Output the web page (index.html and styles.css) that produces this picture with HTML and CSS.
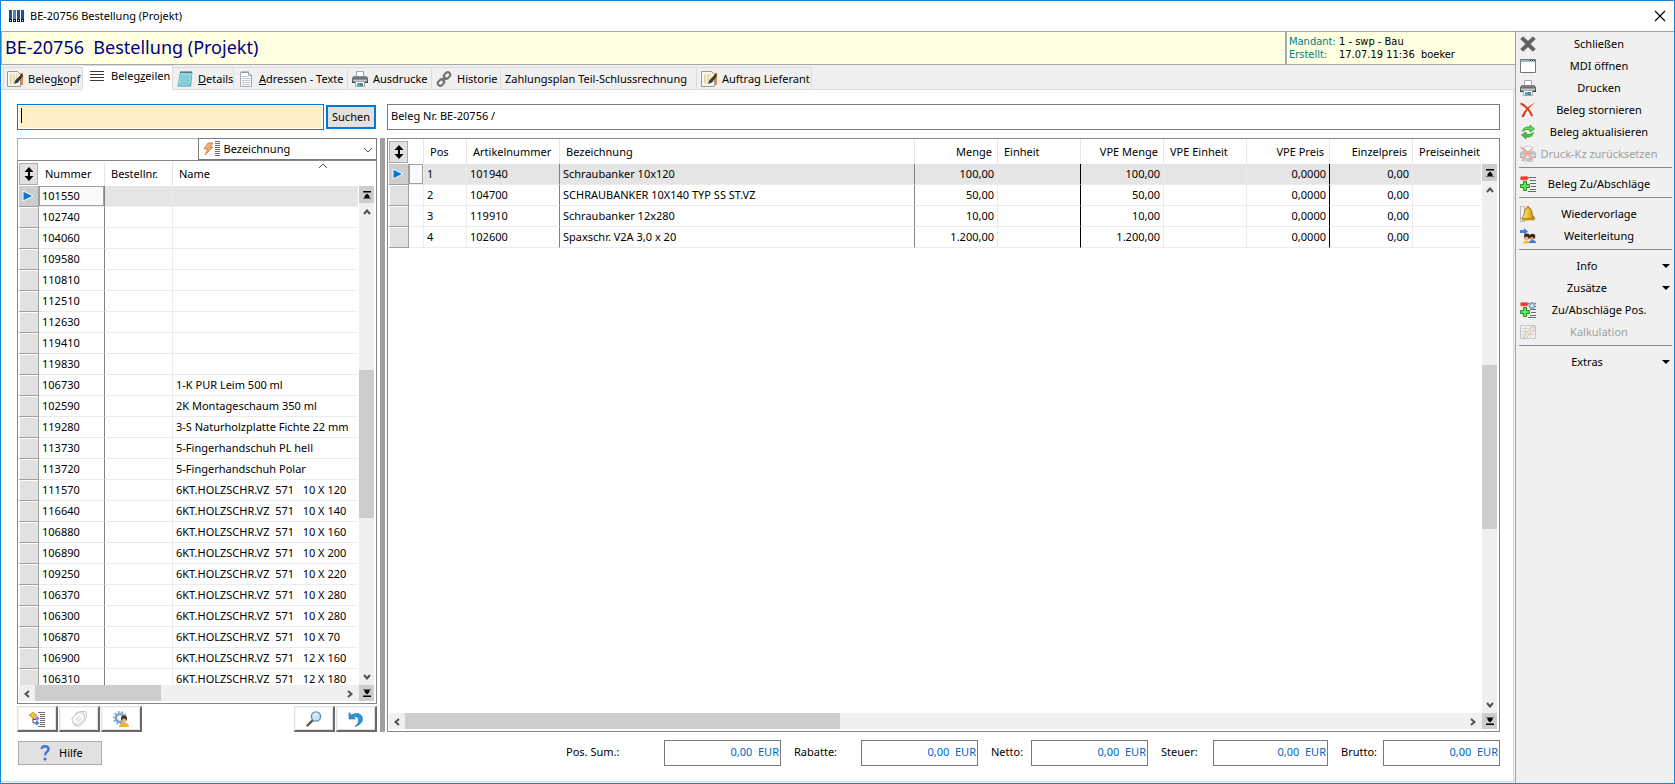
FILE: index.html
```html
<!DOCTYPE html>
<html lang="de">
<head>
    <meta charset="UTF-8">
    <meta name="viewport" content="width=device-width, initial-scale=1.0">
    <title>BE-20756 Bestellung (Projekt)</title>
    <link rel="stylesheet" href="styles.css">
</head>
<body>
    <svg class="defs" aria-hidden="true">
        <defs>
            <linearGradient id="gold" x1="0" x2="1"><stop offset="0" stop-color="#fff0a0"/><stop offset=".5" stop-color="#f2c230"/><stop offset="1" stop-color="#a8780c"/></linearGradient>
            <linearGradient id="steel" x1="0" x2="0" y1="0" y2="1"><stop offset="0" stop-color="#8a8d90"/><stop offset="1" stop-color="#3c3f42"/></linearGradient>
        </defs>
        <symbol id="i-note" viewBox="0 0 16 16">
            <path d="M10 2h6v12h-6z" fill="#e08a3a"/>
            <path d="M.5.500h10l3 3v12H.5z" fill="#faf8ec" stroke="#9a9a92"/>
            <path d="M3 4h7M3 6h7M3 8h6M3 10h5M3 12h4" stroke="#d8b95a" stroke-dasharray="2 1"/>
            <path d="M15 2.500L8.500 9l-1.500 4 4-1.500L16 5z" fill="#3a3a3a"/>
        </symbol>
        <symbol id="i-lines" viewBox="0 0 16 16"><path d="M1 3.500h14M1 6.500h14M1 9.500h14M1 12.500h14" stroke="#3c3c3c"/></symbol>
        <symbol id="i-pad" viewBox="0 0 16 16">
            <path d="M3 1h12.500l-1.500 14.500H.5z" fill="#4aa5b5"/>
            <path d="M3.500 2h11.500l-2 12.500H1z" fill="#95d3de"/>
            <path d="M4.500 6h8M4 9h8M3.500 12h8" stroke="#73c0cc"/>
            <path d="M4 0v2M6 0v2M8 0v2M10 0v2M12 0v2M14 0v2" stroke="#4c5a60"/>
        </symbol>
        <symbol id="i-page" viewBox="0 0 16 16">
            <path d="M2.500 1.500h8l3 3v11h-11z" fill="#fcfcfc" stroke="#a4a8ac"/>
            <path d="M10.500 1.500v3h3" fill="none" stroke="#a4a8ac"/>
            <path d="M4 0v2M6 0v2M8 0v2M10 0v2" stroke="#8a8c90"/>
            <path d="M4 5.500h6M4 7.500h8M4 9.500h8M4 11.500h8M4 13.500h8" stroke="#c0c8d0"/>
        </symbol>
        <symbol id="i-print" viewBox="0 0 16 16">
            <path d="M4.500.5h7v5h-7z" fill="#fff" stroke="#a0a4a8"/>
            <path d="M1.500 5h13l1.500 2v5H0V7z" fill="url(#steel)"/>
            <path d="M1 9.500h14" stroke="#c8cacc" stroke-width="2"/>
            <path d="M3.500 10.500h9v5h-9z" fill="#fff" stroke="#a0a4a8"/>
            <path d="M5 12h3v3H5z" fill="#3fa9dc"/><path d="M8 12h3v3H8z" fill="#4a8a8c"/>
        </symbol>
        <symbol id="i-link" viewBox="0 0 16 16">
            <g fill="none" stroke="#707274" stroke-width="2">
                <rect x="8.500" y="1" width="5" height="7" rx="2.500" transform="rotate(45 11 4.500)"/>
                <rect x="2.500" y="8" width="5" height="7" rx="2.500" transform="rotate(45 5 11.500)"/>
                <path d="M6 10l4-4"/>
            </g>
        </symbol>
        <symbol id="i-close" viewBox="0 0 16 16">
            <path d="M3 .5l5 4.500 5-4.500L15.500 3l-5 5 5 5-2.500 2.500-5-4.500-5 4.500L.5 13l5-5-5-5z" fill="#5d6062" stroke="#898c8e" stroke-width=".6"/>
        </symbol>
        <symbol id="i-window" viewBox="0 0 16 16">
            <path d="M.5 1.500h15v13H.5z" fill="#fff" stroke="#6e7680"/>
            <path d="M1 3h14" stroke="#9db4d0" stroke-width="2"/>
            <path d="M10 2.500h1M12 2.500h1M14 2.500h1" stroke="#44546c"/>
        </symbol>
        <symbol id="i-cancel" viewBox="0 0 16 16">
            <path d="M.5.500c5 1.500 9.500 6.500 12.500 12.500l-1.500 2C9 9 5 5 .5 2.500z" fill="#e03a20"/>
            <path d="M15.500.500C10 4 6 9 4 15H1.500C4 8.500 8.500 3.500 15.500.500z" fill="#e03a20"/>
        </symbol>
        <symbol id="i-refresh" viewBox="0 0 16 16">
            <path d="M2.500 7.500C3 4 6.500 2 10 3.500V1l4.500 4-4.500 3V6C7.500 5 5 5.500 2.500 7.500z" fill="#6bd45a" stroke="#2c9a28" stroke-width=".8"/>
            <path d="M13.500 8.500C13 12 9.500 14 6 12.500V15l-4.500-4L6 8v2c2.500 1 5 .5 7.500-1.500z" fill="#4cc43e" stroke="#2c9a28" stroke-width=".8"/>
        </symbol>
        <symbol id="i-plusminus" viewBox="0 0 16 16">
            <path d="M8 1.500h8M10 4.500h6M10 7.500h6M11 10.500h5M10 13.500h6M8 15.500h8" stroke="#6a6a6a"/>
            <rect x=".5" y=".5" width="7.500" height="3.500" rx="1" fill="#f03828" stroke="#ff7a70" stroke-width=".8"/>
            <path d="M3.500 5.500h3v3h3v3h-3v3h-3v-3h-3v-3h3z" fill="#6cdc5c" stroke="#1c9420"/>
        </symbol>
        <symbol id="i-bell" viewBox="0 0 16 16">
            <path d="M.5.5h4v15h-4z" fill="#f4f4f4" stroke="#b8b8b8"/>
            <path d="M8 1.500c3 0 3.500 3 4 5.500.4 2.500 1.500 3.500 3 5.500H1.500C3.500 10.500 3.800 9 4.200 7 4.800 4 5.500 1.500 8 1.500z" fill="url(#gold)" stroke="#8a660c" stroke-width=".8"/>
            <path d="M2 13.500h12.500" stroke="#c89a1c" stroke-width="2"/><circle cx="8" cy="1.300" r="1.200" fill="#b88a14"/>
        </symbol>
        <symbol id="i-people" viewBox="0 0 16 16">
            <path d="M0 2h4V0l4 3.500L4 7V5H0z" fill="#4a7fd0"/>
            <path d="M3 15.500c0-4 7-4 7 0z" fill="#f0c040"/><path d="M9 15c0-4 7-4 7 0z" fill="#3c78d8"/>
            <circle cx="7" cy="8.500" r="3" fill="#3a2418"/><circle cx="6.500" cy="10.500" r="2" fill="#e8b080"/>
            <circle cx="12.500" cy="8.500" r="2.800" fill="#3a2418"/><circle cx="12" cy="10.500" r="1.800" fill="#d89468"/>
        </symbol>
        <symbol id="i-calc" viewBox="0 0 16 16">
            <path d="M.5 1.500h15v13H.5z" fill="#f6f6f6" stroke="#8c8c8c"/>
            <path d="M1 4.500h14M1 7.500h14M1 10.500h14M5.500 2v12M10.500 2v12" stroke="#b0b0b0"/>
            <path d="M13 2l2.500 2.500-9 9L3 15l1-3.500z" fill="#f0d8a0" stroke="#a08050"/>
        </symbol>
        <symbol id="i-flash" viewBox="0 0 18 16">
            <path d="M5 2h5L7 6h3l-8 8 3-6H1z" fill="#f5b070" stroke="#b86a3c" stroke-width=".7"/>
            <path d="M12 .5h5M12 2.500h5M12 4.500h5M12 6.500h5M12 8.500h5M12 10.500h5M12 12.500h5M12 14.500h5" stroke="#707070"/>
        </symbol>
        <symbol id="i-updown" viewBox="0 0 10 14"><path d="M5 0l4.500 5H6v4h3.500L5 14 .5 9H4V5H.5z"/></symbol>
        <symbol id="i-current" viewBox="0 0 12 12"><path d="M1 1l10 5-10 5z" fill="#0078d7" stroke="#fff"/></symbol>
        <symbol id="i-chev" viewBox="0 0 8 6"><path d="M1 5l3-3.500L7 5" fill="none" stroke="currentColor" stroke-width="2"/></symbol>
        <symbol id="i-chevthin" viewBox="0 0 10 6"><path d="M1 5l4-4 4 4" fill="none" stroke="#505050"/></symbol>
        <symbol id="i-end" viewBox="0 0 8 8"><path d="M0 0h8v1.500H0zM4 2.500L6.500 5H8v2.500H0V5h1.500z"/><path d="M0 7h1.500V4H0zM8 7H6.500V4H8z" fill="#cdcdcd"/></symbol>
        <symbol id="i-tree" viewBox="0 0 16 16">
            <path d="M9 1.500h7M11 3.500h5M11 5.500h5M11 7.500h5M11 9.500h5M11 11.500h5M11 13.500h5M9 15.500h7" stroke="#707070"/>
            <path d="M4 6v6h3M4 8.500h3" fill="none" stroke="#505050"/>
            <path d="M4 1l4 3-4 3.500L0 4z" fill="#f0c430" stroke="#a88418" stroke-width=".6"/>
            <path d="M8 5l2.500 2.500L8 10 5.500 7.500z" fill="#b86ad8"/><path d="M8 9.500l2.500 2.500L8 14.500 5.500 12z" fill="#4a80d8"/>
        </symbol>
        <symbol id="i-tag" viewBox="0 0 16 16">
            <g fill="#fafafa" stroke="#c8c8c8">
                <path d="M5 2l4-1.500h6l.5 5-2 5-5.500 5-5-1z"/><path d="M1 7l6-5.500 5.500.5 1.500 5.500L7.500 14 1.500 12z"/>
                <path d="M4.500 9l4-3.500M6 11l4-3.500"/>
            </g>
        </symbol>
        <symbol id="i-gear" viewBox="0 0 16 16">
            <circle cx="7" cy="7" r="6" fill="none" stroke="#8aaccc" stroke-width="2" stroke-dasharray="2 1.600"/>
            <circle cx="7" cy="7" r="4" fill="#f2f7fb" stroke="#7aa6ca" stroke-width="2.500"/>
            <path d="M6 16c0-6 10-6 10 0z" fill="#f0b428"/>
            <circle cx="11" cy="7.500" r="3" fill="#4a2a18"/><circle cx="11" cy="9.500" r="2" fill="#eebc90"/>
        </symbol>
        <symbol id="i-gearsmall" viewBox="0 0 16 16">
            <use href="#i-plusminus"/>
            <circle cx="12" cy="3.500" r="2.500" fill="#dce8f4" stroke="#8aa8c8" stroke-width="2"/>
        </symbol>
        <symbol id="i-magnify" viewBox="0 0 16 16">
            <path d="M6.500 9.500l-5 5" stroke="#5c5248" stroke-width="2.400" stroke-linecap="round"/>
            <circle cx="10" cy="5.500" r="4.600" fill="#c4e4fa" stroke="#6c8ca8" stroke-width="1.400"/>
            <path d="M7.500 5c.5-1.500 2-2.300 3.500-2" stroke="#fff" fill="none"/>
        </symbol>
        <symbol id="i-undo" viewBox="0 0 16 16">
            <path d="M1 1.500V8h6.500L5.500 6c3.500-1 5.500 1 5 4-.2 1.800-1.500 3.500-3.500 5.500 5-1.500 7.500-4.500 7.500-7.800C14.500 3 9 .8 3.500 4z" fill="#2c94dc" stroke="#1a6cb0" stroke-width=".6"/>
        </symbol>
        <symbol id="i-help" viewBox="0 0 10 16">
            <path d="M1.500 4C2 1.800 3.500 1.300 5 1.300c2 0 3.500 1 3.500 3C8.500 7 5 7 5 10.500" fill="none" stroke="#3f74d8" stroke-width="2.400"/>
            <circle cx="5" cy="14" r="1.600" fill="#3f74d8"/>
        </symbol>
        <symbol id="i-app" viewBox="0 0 16 12">
            <path d="M0 0h3v12H0zM8 0h3v12H8z" fill="#24508c"/><path d="M4 0h3v12H4z" fill="#5c80b4"/><path d="M12 0h3v12h-3z" fill="#1c4c9c"/>
            <path d="M0 9h3v3H0zM4 9h3v3H4zM8 9h3v3H8zM12 9h3v3h-3z" fill="#101820"/>
            <path d="M1 10.500h1M5 10.500h1M9 10.500h1M13 10.500h1" stroke="#fff"/>
        </symbol>
        <symbol id="i-x" viewBox="0 0 12 12"><path d="M1 1l10 10M11 1L1 11" stroke="#000" stroke-width="1.200"/></symbol>
    </svg>

    <div class="window">
        <header class="titlebar">
            <svg class="app-icon"><use href="#i-app"/></svg>
            <span>BE-20756 Bestellung (Projekt)</span>
            <button class="close" aria-label="Fenster schließen"><svg><use href="#i-x"/></svg></button>
        </header>

        <div class="body">
            <main class="main">
                <div class="banner">
                    <h1>BE-20756&nbsp; Bestellung (Projekt)</h1>
                    <dl class="meta">
                        <dt>Mandant:</dt><dd>1 - swp - Bau</dd>
                        <dt>Erstellt:</dt><dd>17.07.19 11:36&nbsp; boeker</dd>
                    </dl>
                </div>

                <nav class="tabs" role="tablist">
                    <button class="tab" role="tab"><svg class="icon"><use href="#i-note"/></svg><span>Beleg<u>k</u>opf</span></button>
                    <button class="tab active" role="tab" aria-selected="true"><svg class="icon"><use href="#i-lines"/></svg><span>Beleg<u>z</u>eilen</span></button>
                    <button class="tab" role="tab"><svg class="icon"><use href="#i-pad"/></svg><span><u>D</u>etails</span></button>
                    <button class="tab" role="tab"><svg class="icon"><use href="#i-page"/></svg><span><u>A</u>dressen - Texte</span></button>
                    <button class="tab" role="tab"><svg class="icon"><use href="#i-print"/></svg><span>Ausdrucke</span></button>
                    <button class="tab" role="tab"><svg class="icon"><use href="#i-link"/></svg><span>Historie</span></button>
                    <button class="tab" role="tab"><span>Zahlungsplan Teil-Schlussrechnung</span></button>
                    <button class="tab" role="tab"><svg class="icon"><use href="#i-note"/></svg><span>Auftrag Lieferant</span></button>
                </nav>

                <section class="page">
                    <div class="search-row">
                        <form class="search">
                            <input type="text" class="search-input" aria-label="Suche">
                            <span class="caret"></span>
                            <button type="button" class="search-button">Suchen</button>
                        </form>
                        <input type="text" class="beleg" aria-label="Beleg" value="Beleg Nr. BE-20756 /" readonly>
                    </div>

                    <div class="split">
                        <div class="left">
                            <div class="filter">
                                <input type="text" class="filter-input" aria-label="Filter">
                                <div class="combo">
                                    <svg class="combo-icon"><use href="#i-flash"/></svg>
                                    <select aria-label="Sortierung"><option>Bezeichnung</option></select>
                                    <svg class="combo-arrow"><use href="#i-chevthin"/></svg>
                                </div>
                            </div>

                            <div class="grid">
                                <div class="grid-view">
                                    <div class="grid-rows">
                                        <svg class="sort-mark"><use href="#i-chevthin"/></svg>
                                        <table class="articles">
                                            <colgroup><col class="c-head"><col class="c-num"><col class="c-order"><col></colgroup>
                                            <thead><tr><th class="handle"><span><svg><use href="#i-updown"/></svg></span></th><th>Nummer</th><th>Bestellnr.</th><th>Name</th></tr></thead>
                                            <tbody>
                                                <tr class="current"><td><svg><use href="#i-current"/></svg></td><td>101550</td><td></td><td></td></tr>
                                                <tr><td></td><td>102740</td><td></td><td></td></tr>
                                                <tr><td></td><td>104060</td><td></td><td></td></tr>
                                                <tr><td></td><td>109580</td><td></td><td></td></tr>
                                                <tr><td></td><td>110810</td><td></td><td></td></tr>
                                                <tr><td></td><td>112510</td><td></td><td></td></tr>
                                                <tr><td></td><td>112630</td><td></td><td></td></tr>
                                                <tr><td></td><td>119410</td><td></td><td></td></tr>
                                                <tr><td></td><td>119830</td><td></td><td></td></tr>
                                                <tr><td></td><td>106730</td><td></td><td>1-K PUR Leim 500 ml</td></tr>
                                                <tr><td></td><td>102590</td><td></td><td>2K Montageschaum 350 ml</td></tr>
                                                <tr><td></td><td>119280</td><td></td><td>3-S Naturholzplatte Fichte 22 mm</td></tr>
                                                <tr><td></td><td>113730</td><td></td><td>5-Fingerhandschuh PL hell</td></tr>
                                                <tr><td></td><td>113720</td><td></td><td>5-Fingerhandschuh Polar</td></tr>
                                                <tr><td></td><td>111570</td><td></td><td>6KT.HOLZSCHR.VZ  571   10 X 120</td></tr>
                                                <tr><td></td><td>116640</td><td></td><td>6KT.HOLZSCHR.VZ  571   10 X 140</td></tr>
                                                <tr><td></td><td>106880</td><td></td><td>6KT.HOLZSCHR.VZ  571   10 X 160</td></tr>
                                                <tr><td></td><td>106890</td><td></td><td>6KT.HOLZSCHR.VZ  571   10 X 200</td></tr>
                                                <tr><td></td><td>109250</td><td></td><td>6KT.HOLZSCHR.VZ  571   10 X 220</td></tr>
                                                <tr><td></td><td>106370</td><td></td><td>6KT.HOLZSCHR.VZ  571   10 X 280</td></tr>
                                                <tr><td></td><td>106300</td><td></td><td>6KT.HOLZSCHR.VZ  571   10 X 280</td></tr>
                                                <tr><td></td><td>106870</td><td></td><td>6KT.HOLZSCHR.VZ  571   10 X 70</td></tr>
                                                <tr><td></td><td>106900</td><td></td><td>6KT.HOLZSCHR.VZ  571   12 X 160</td></tr>
                                                <tr><td></td><td>106310</td><td></td><td>6KT.HOLZSCHR.VZ  571   12 X 180</td></tr>
                                            </tbody>
                                        </table>
                                    </div>
                                    <div class="vscroll">
                                        <span class="jump up"><svg><use href="#i-end"/></svg></span>
                                        <span class="step up"><svg><use href="#i-chev"/></svg></span>
                                        <div class="vtrack"><div class="vthumb"></div></div>
                                        <span class="step down"><svg><use href="#i-chev"/></svg></span>
                                    </div>
                                </div>
                                <div class="hscroll">
                                    <span class="step left-arrow"><svg><use href="#i-chev"/></svg></span>
                                    <div class="htrack"><div class="hthumb"></div></div>
                                    <span class="step right-arrow"><svg><use href="#i-chev"/></svg></span>
                                    <span class="jump down"><svg><use href="#i-end"/></svg></span>
                                </div>
                            </div>

                            <div class="tools">
                                <button class="tool" aria-label="Struktur"><svg class="icon"><use href="#i-tree"/></svg></button>
                                <button class="tool" aria-label="Etikett" disabled><svg class="icon"><use href="#i-tag"/></svg></button>
                                <button class="tool" aria-label="Einstellungen"><svg class="icon"><use href="#i-gear"/></svg></button>
                                <button class="tool find" aria-label="Suchen"><svg class="icon"><use href="#i-magnify"/></svg></button>
                                <button class="tool" aria-label="Zurück"><svg class="icon"><use href="#i-undo"/></svg></button>
                            </div>
                        </div>

                        <div class="splitter"></div>

                        <div class="grid">
                            <div class="grid-view">
                                <div class="grid-rows">
                                    <table class="positions">
                                        <colgroup><col class="c-head"><col class="c-flag"><col class="c-pos"><col class="c-art"><col><col class="c-val"><col class="c-val"><col class="c-val"><col class="c-val"><col class="c-val"><col class="c-val"><col class="c-unit"></colgroup>
                                        <thead>
                                            <tr><th class="handle"><span><svg><use href="#i-updown"/></svg></span></th><th></th><th>Pos</th><th>Artikelnummer</th><th>Bezeichnung</th><th class="num">Menge</th><th>Einheit</th><th class="num">VPE Menge</th><th>VPE Einheit</th><th class="num">VPE Preis</th><th class="num">Einzelpreis</th><th>Preiseinheit</th></tr>
                                        </thead>
                                        <tbody>
                                            <tr class="current"><td><svg><use href="#i-current"/></svg></td><td></td><td>1</td><td>101940</td><td>Schraubanker 10x120</td><td class="num">100,00</td><td></td><td class="num">100,00</td><td></td><td class="num">0,0000</td><td class="num">0,00</td><td></td></tr>
                                            <tr><td></td><td></td><td>2</td><td>104700</td><td>SCHRAUBANKER 10X140 TYP SS ST.VZ</td><td class="num">50,00</td><td></td><td class="num">50,00</td><td></td><td class="num">0,0000</td><td class="num">0,00</td><td></td></tr>
                                            <tr><td></td><td></td><td>3</td><td>119910</td><td>Schraubanker 12x280</td><td class="num">10,00</td><td></td><td class="num">10,00</td><td></td><td class="num">0,0000</td><td class="num">0,00</td><td></td></tr>
                                            <tr><td></td><td></td><td>4</td><td>102600</td><td>Spaxschr. V2A 3,0 x 20</td><td class="num">1.200,00</td><td></td><td class="num">1.200,00</td><td></td><td class="num">0,0000</td><td class="num">0,00</td><td></td></tr>
                                        </tbody>
                                    </table>
                                </div>
                                <div class="vscroll">
                                    <span class="jump up"><svg><use href="#i-end"/></svg></span>
                                    <span class="step up"><svg><use href="#i-chev"/></svg></span>
                                    <div class="vtrack"><div class="vthumb"></div></div>
                                    <span class="step down"><svg><use href="#i-chev"/></svg></span>
                                </div>
                            </div>
                            <div class="hscroll">
                                <span class="step left-arrow"><svg><use href="#i-chev"/></svg></span>
                                <div class="htrack"><div class="hthumb"></div></div>
                                <span class="step right-arrow"><svg><use href="#i-chev"/></svg></span>
                                <span class="jump down"><svg><use href="#i-end"/></svg></span>
                            </div>
                        </div>
                    </div>

                    <footer class="footer">
                        <button class="help"><svg><use href="#i-help"/></svg>Hilfe</button>
                        <div class="totals">
                            <label for="sum">Pos. Sum.:</label><input type="text" id="sum" value="0,00  EUR" readonly>
                            <label for="rabatte">Rabatte:</label><input type="text" id="rabatte" value="0,00  EUR" readonly>
                            <label for="netto">Netto:</label><input type="text" id="netto" value="0,00  EUR" readonly>
                            <label for="steuer">Steuer:</label><input type="text" id="steuer" value="0,00  EUR" readonly>
                            <label for="brutto">Brutto:</label><input type="text" id="brutto" value="0,00  EUR" readonly>
                        </div>
                    </footer>
                </section>
            </main>

            <aside class="sidebar">
                <button class="action"><svg class="icon"><use href="#i-close"/></svg><span>Schließen</span></button>
                <button class="action"><svg class="icon"><use href="#i-window"/></svg><span>MDI öffnen</span></button>
                <button class="action"><svg class="icon"><use href="#i-print"/></svg><span>Drucken</span></button>
                <button class="action"><svg class="icon"><use href="#i-cancel"/></svg><span>Beleg stornieren</span></button>
                <button class="action"><svg class="icon"><use href="#i-refresh"/></svg><span>Beleg aktualisieren</span></button>
                <button class="action" disabled><svg class="icon"><use href="#i-print"/><use href="#i-cancel"/></svg><span>Druck-Kz zurücksetzen</span></button>
                <hr>
                <button class="action"><svg class="icon"><use href="#i-plusminus"/></svg><span>Beleg Zu/Abschläge</span></button>
                <hr>
                <button class="action"><svg class="icon"><use href="#i-bell"/></svg><span>Wiedervorlage</span></button>
                <button class="action"><svg class="icon"><use href="#i-people"/></svg><span>Weiterleitung</span></button>
                <hr>
                <button class="action menu"><span>Info</span></button>
                <button class="action menu"><span>Zusätze</span></button>
                <button class="action"><svg class="icon"><use href="#i-gearsmall"/></svg><span>Zu/Abschläge Pos.</span></button>
                <button class="action" disabled><svg class="icon"><use href="#i-calc"/></svg><span>Kalkulation</span></button>
                <hr>
                <button class="action menu"><span>Extras</span></button>
            </aside>
        </div>
    </div>
</body>
</html>
```
FILE: styles.css
```css
* {
    box-sizing: border-box;
}
body {
    margin: 0;
    font-family: "Noto Sans", "Open Sans", sans-serif;
    font-size: 11px;
    line-height: 16px;
    color: #000;
    background-color: #fff;
}
button, input, select {
    font: inherit;
    color: inherit;
    margin: 0;
    border-radius: 0;
}
button {
    padding: 0;
    border: 0;
    background: none;
}
input {
    outline: none;
    min-width: 0;
}
svg {
    display: block;
}
.defs {
    position: absolute;
    width: 0;
    height: 0;
}
.icon {
    width: 16px;
    height: 16px;
    flex: none;
}

/* Fenster */
.window {
    display: flex;
    flex-direction: column;
    height: 100vh;
    border: 1px solid #1883d7;
}
.titlebar {
    display: flex;
    align-items: center;
    gap: 5px;
    height: 30px;
    padding: 0 8px;
}
.app-icon {
    width: 16px;
    height: 12px;
}
.close {
    margin-left: auto;
}
.close svg {
    width: 12px;
    height: 12px;
}
.body {
    display: flex;
    flex: 1;
    min-height: 0;
    background-color: #f0f0f0;
}
.main {
    display: flex;
    flex-direction: column;
    flex: 1;
    min-width: 0;
    padding-bottom: 1px;
}

/* Kopfzeile */
.banner {
    display: flex;
    height: 34px;
    border: 1px solid #a6a8b0;
    border-right: 0;
    background-color: #ffffe1;
}
.banner h1 {
    flex: 1;
    margin: 0;
    padding-left: 3px;
    font-size: 18px;
    font-weight: normal;
    line-height: 30px;
    color: #000080;
}
.meta {
    display: grid;
    grid-template-columns: 50px 1fr;
    align-content: center;
    width: 230px;
    margin: 0;
    padding-left: 2px;
    border-left: 2px solid #a6a8b0;
    font-family: "DejaVu Sans Condensed", "DejaVu Sans", sans-serif;
    line-height: 13px;
}
.meta dt {
    color: #008080;
}
.meta dd {
    margin: 0;
}

/* Reiter */
.tabs {
    display: grid;
    grid-template-columns: 80px 90px 61px 114px 84px 69px 196px 115px;
    align-items: end;
    height: 25px;
    padding-left: 2px;
    border-bottom: 1px solid #dcdcdc;
}
.tab {
    display: flex;
    align-items: center;
    gap: 5px;
    height: 22px;
    padding-left: 4px;
    border: 1px solid #dcdcdc;
    border-width: 1px 1px 0 0;
    white-space: nowrap;
}
.tab:first-child {
    border-left-width: 1px;
    padding-left: 3px;
}
.tab.active {
    height: 25px;
    margin-bottom: -1px;
    padding: 0 0 4px 6px;
    gap: 6px;
    background-color: #fff;
}
.page {
    display: flex;
    flex-direction: column;
    flex: 1;
    min-height: 0;
    gap: 8px;
    margin-right: 1px;
    padding: 14px 13px 15px 16px;
    border: 1px solid #dcdcdc;
    border-width: 0 1px 1px 0;
    background-color: #fff;
}

/* Suche */
.search-row {
    display: flex;
    gap: 10px;
    height: 26px;
}
.search {
    position: relative;
    display: flex;
    align-items: center;
    gap: 2px;
    width: 360px;
    padding-right: 1px;
}
.search-input {
    flex: 1;
    height: 26px;
    padding: 0 3px 4px;
    border: 1px solid #0078d7;
    box-shadow: inset 0 0 0 1px #fff;
    background-color: #ffefc6;
}
.caret {
    position: absolute;
    left: 4px;
    top: 4px;
    width: 1px;
    height: 15px;
    background-color: #000;
}
.search-button {
    width: 50px;
    height: 24px;
    border: 2px solid #0078d7;
    background-color: #e1e1e1;
}
.beleg {
    flex: 1;
    padding: 0 3px 2px;
    border: 1px solid #7a7a7a;
    background-color: #fff;
}
.split {
    display: flex;
    flex: 1;
    min-height: 0;
}
.left {
    display: flex;
    flex-direction: column;
    width: 360px;
}
.splitter {
    width: 5px;
    margin: 0 2px 0 3px;
    background-color: #a0a0a0;
}
.filter {
    display: flex;
    height: 22px;
}
.filter-input {
    flex: 1;
    width: 0;
    padding: 0;
    border: 1px solid #b0b0b4;
    border-width: 1px 0 0 1px;
}
.combo {
    position: relative;
    flex: 1;
}
.combo select {
    width: 100%;
    height: 22px;
    padding: 0 22px 1px 25px;
    border: 1px solid #7a7a7a;
    background-color: #fff;
    appearance: none;
}
.combo-icon {
    position: absolute;
    left: 5px;
    top: 3px;
    width: 18px;
    height: 16px;
}
.combo-arrow {
    position: absolute;
    right: 4px;
    top: 9px;
    width: 10px;
    height: 6px;
    transform: rotate(180deg);
}

/* Tabellen */
.grid {
    display: flex;
    flex-direction: column;
    flex: 1;
    min-width: 0;
    min-height: 0;
    padding: 1px;
    border: 1px solid #828790;
}
.grid-view {
    display: flex;
    flex: 1;
    min-height: 0;
}
.grid-rows {
    position: relative;
    flex: 1;
    min-width: 0;
    overflow: hidden;
}
.sort-mark {
    position: absolute;
    left: 299px;
    top: 1px;
    width: 10px;
    height: 6px;
}
table {
    width: 100%;
    border-spacing: 0;
    table-layout: fixed;
}
.c-head { width: 20px; }
.c-num { width: 66px; }
.c-order { width: 68px; }
.c-flag { width: 15px; }
.c-pos { width: 43px; }
.c-art { width: 93px; }
.c-val { width: 83px; }
.c-unit { width: 68px; }
th {
    height: 24px;
    padding: 0 0 0 6px;
    border-right: 1px solid #e5e5e5;
    font-weight: normal;
    text-align: left;
    white-space: nowrap;
}
th:last-child {
    border-right: 0;
}
th.num {
    padding-right: 5px;
    text-align: right;
}
th.handle {
    padding: 0 1px 0 0;
    border: 0;
}
.handle span {
    display: flex;
    align-items: center;
    justify-content: center;
    height: 22px;
    border: 1px solid #adadad;
    background-color: #e1e1e1;
}
.handle svg {
    width: 10px;
    height: 14px;
}
td {
    height: 21px;
    padding: 0 3px;
    border-right: 1px solid #ececec;
    border-bottom: 1px solid #ececec;
    line-height: 18px;
    white-space: pre;
}
td:last-child {
    border-right: 0;
}
td.num {
    text-align: right;
}
td:first-child {
    border-right-color: #a0a0a0;
    border-bottom-color: #a0a0a0;
    box-shadow: inset 1px 1px #fff;
    background-color: #e1e1e1;
}
td:first-child svg {
    width: 12px;
    height: 12px;
}
.current td {
    background-color: #e5e5e5;
}
.current td:first-child {
    background-color: #cdcdcd;
    box-shadow: none;
}
.current td:nth-child(2) {
    background-color: #fafafa;
    box-shadow: inset 0 0 0 1px #a0a0a0;
}
.articles td:nth-child(2),
.positions td:nth-child(4),
.positions td:nth-child(5) {
    border-right-color: #808080;
}
.positions td:nth-child(7),
.positions td:nth-child(10) {
    border-right-color: #000;
}

/* Bildlaufleisten */
.vscroll {
    display: flex;
    flex-direction: column;
    width: 15px;
    margin: 24px 1px 0 1px;
    background-color: #f0f0f0;
}
.hscroll {
    display: flex;
    height: 16px;
    margin: 0 1px 1px 0;
    background-color: #f0f0f0;
}
.step, .jump {
    display: flex;
    align-items: center;
    justify-content: center;
    flex: none;
    width: 16px;
    height: 17px;
    color: #505050;
}
.jump {
    width: 15px;
    background-color: #cdcdcd;
}
.vscroll .step {
    width: 15px;
}
.hscroll .jump {
    height: 16px;
    margin-left: 1px;
}
.step svg {
    width: 8px;
    height: 6px;
}
.jump svg {
    width: 8px;
    height: 8px;
}
.down svg {
    transform: rotate(180deg);
}
.left-arrow svg {
    transform: rotate(-90deg);
}
.right-arrow svg {
    transform: rotate(90deg);
}
.vtrack {
    display: flex;
    flex: 1;
    align-items: center;
}
.vthumb {
    width: 100%;
    height: 33%;
    background-color: #cdcdcd;
}
.htrack {
    flex: 1;
}
.hthumb {
    width: 41%;
    height: 100%;
    background-color: #cdcdcd;
}

/* Werkzeuge unter der Artikelliste */
.tools {
    display: flex;
    gap: 1px;
    margin-top: 2px;
}
.tool {
    display: flex;
    align-items: center;
    justify-content: center;
    width: 41px;
    height: 26px;
    border: 1px solid #e3e3e3;
    border-right: 2px solid #696969;
    border-bottom: 2px solid #696969;
    box-shadow: inset 1px 1px #f4f4f4, inset -1px -1px #e0e0e0;
    background-color: #fff;
}
.tool.find {
    margin-left: auto;
}

/* Fußzeile */
.footer {
    display: flex;
    justify-content: space-between;
    align-items: center;
    height: 26px;
}
.help {
    display: flex;
    align-items: center;
    gap: 9px;
    width: 84px;
    height: 24px;
    margin-left: 1px;
    padding-left: 21px;
    border: 1px solid #adadad;
    background-color: #e1e1e1;
}
.help svg {
    width: 10px;
    height: 16px;
}
.totals {
    display: grid;
    grid-template-columns: 98px 117px 80px 117px 53px 117px 65px 115px 55px 117px;
}
.totals label {
    padding: 4px 0 0 13px;
}
.totals label:first-child {
    padding-left: 0;
}
.totals input {
    width: 100%;
    height: 26px;
    padding: 0 1px 3px;
    border: 1px solid #7a7a7a;
    background-color: #fff;
    color: #0066cc;
    text-align: right;
}

/* Aktionen rechts */
.sidebar {
    width: 159px;
    padding-top: 1px;
    border-top: 1px solid #a0a0a0;
    border-left: 1px solid #a0a0a0;
}
.action {
    position: relative;
    display: flex;
    align-items: center;
    width: 100%;
    height: 22px;
    padding: 0 12px 0 4px;
}
.action span {
    flex: 1;
    text-align: center;
    white-space: nowrap;
}
.action:disabled {
    color: #a0a0a0;
}
.action:disabled .icon {
    opacity: 0.4;
}
.action.menu {
    padding: 0 20px 0 4px;
}
.action.menu::after {
    content: "";
    position: absolute;
    right: 4px;
    top: 9px;
    border: 4px solid transparent;
    border-top-color: #000;
    border-bottom: 0;
}
.sidebar hr {
    height: 1px;
    margin: 2px 2px 5px 3px;
    border: 0;
    background-color: #888;
}
```
